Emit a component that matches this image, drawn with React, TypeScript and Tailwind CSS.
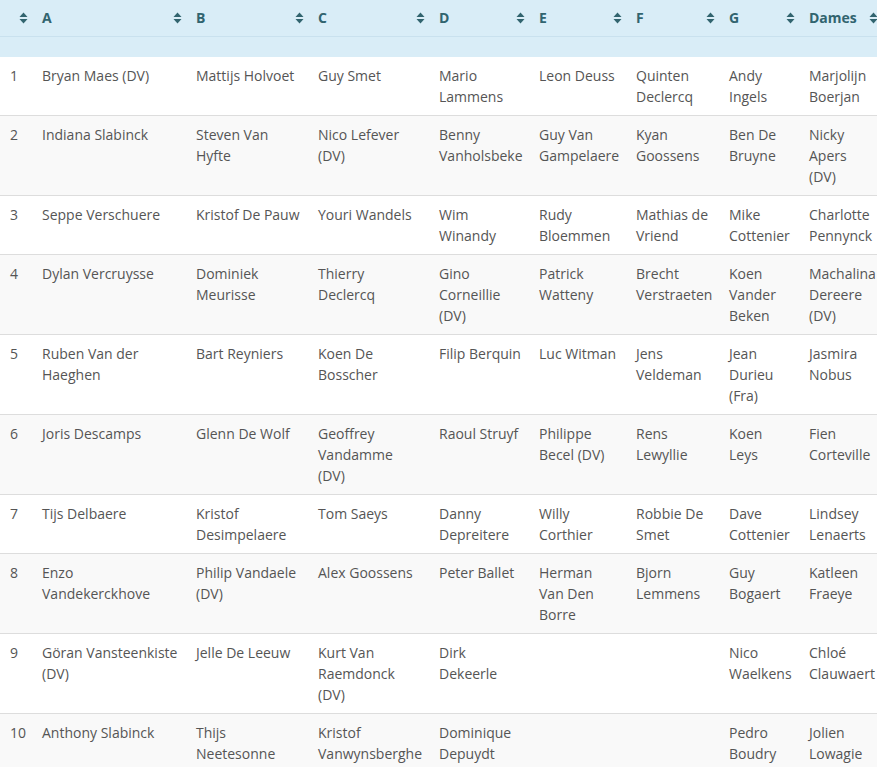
import React from "react";

const columns = ["", "A", "B", "C", "D", "E", "F", "G", "Dames"];
const widths = ["w-[34px]", "w-[154px]", "w-[122px]", "w-[121px]", "w-[100px]", "w-[97px]", "w-[93px]", "w-[80px]", "w-[83px]"];

const rows: string[][] = [
    ["Bryan Maes (DV)", "Mattijs Holvoet", "Guy Smet", "Mario Lammens", "Leon Deuss", "Quinten Declercq", "Andy Ingels", "Marjolijn Boerjan"],
    ["Indiana Slabinck", "Steven Van Hyfte", "Nico Lefever (DV)", "Benny Vanholsbeke", "Guy Van Gampelaere", "Kyan Goossens", "Ben De Bruyne", "Nicky Apers (DV)"],
    ["Seppe Verschuere", "Kristof De Pauw", "Youri Wandels", "Wim Winandy", "Rudy Bloemmen", "Mathias de Vriend", "Mike Cottenier", "Charlotte Pennynck"],
    ["Dylan Vercruysse", "Dominiek Meurisse", "Thierry Declercq", "Gino Corneillie (DV)", "Patrick Watteny", "Brecht Verstraeten", "Koen Vander Beken", "Machalina Dereere (DV)"],
    ["Ruben Van der Haeghen", "Bart Reyniers", "Koen De Bosscher", "Filip Berquin", "Luc Witman", "Jens Veldeman", "Jean Durieu (Fra)", "Jasmira Nobus"],
    ["Joris Descamps", "Glenn De Wolf", "Geoffrey Vandamme (DV)", "Raoul Struyf", "Philippe Becel (DV)", "Rens Lewyllie", "Koen Leys", "Fien Corteville"],
    ["Tijs Delbaere", "Kristof Desimpelaere", "Tom Saeys", "Danny Depreitere", "Willy Corthier", "Robbie De Smet", "Dave Cottenier", "Lindsey Lenaerts"],
    ["Enzo Vandekerckhove", "Philip Vandaele (DV)", "Alex Goossens", "Peter Ballet", "Herman Van Den Borre", "Bjorn Lemmens", "Guy Bogaert", "Katleen Fraeye"],
    ["Göran Vansteenkiste (DV)", "Jelle De Leeuw", "Kurt Van Raemdonck (DV)", "Dirk Dekeerle", "", "", "Nico Waelkens", "Chloé Clauwaert"],
    ["Anthony Slabinck", "Thijs Neetesonne", "Kristof Vanwynsberghe", "Dominique Depuydt", "", "", "Pedro Boudry", "Jolien Lowagie"],
];

function SortIcon() {
    return (
        <svg width="9" height="14" viewBox="0 0 9 14" className="shrink-0 fill-[#31646f]">
            <path d="M0.5 6 L4.5 1.5 L8.5 6 Z" />
            <path d="M0.5 8 L4.5 12.5 L8.5 8 Z" />
        </svg>
    );
}

export default function App() {
    return (
        <div className="w-[877px] h-[767px] overflow-hidden bg-white" style={{ fontFamily: "'Open Sans', sans-serif" }}>
            <table className="table-fixed border-collapse w-[884px] text-[14px] leading-[21px] text-[#555]">
                <colgroup>
                    {widths.map((w, i) => (
                        <col key={i} className={w} />
                    ))}
                </colgroup>
                <thead>
                    <tr className="bg-[#d9edf7] border-b border-[#c9e1ee]">
                        {columns.map((c, i) => (
                            <th key={i} className="pt-[7px] pb-2 pl-2 pr-1.5 text-left font-bold text-[#31646f]">
                                <div className="flex items-center justify-between">
                                    <span>{c}</span>
                                    <SortIcon />
                                </div>
                            </th>
                        ))}
                    </tr>
                    <tr className="bg-[#d9edf7] h-[20px]">
                        {columns.map((_, i) => (
                            <th key={i} />
                        ))}
                    </tr>
                </thead>
                <tbody>
                    {rows.map((r, i) => (
                        <tr key={i} className={`${i > 0 ? "border-t border-[#dddddd]" : ""} ${i % 2 === 1 ? "bg-[#f9f9f9]" : "bg-white"}`}>
                            <td className="p-2 pl-2.5 pr-1 align-top">{i + 1}</td>
                            {r.map((name, j) => (
                                <td key={j} className="p-2 align-top">
                                    {name}
                                </td>
                            ))}
                        </tr>
                    ))}
                </tbody>
            </table>
        </div>
    );
}
